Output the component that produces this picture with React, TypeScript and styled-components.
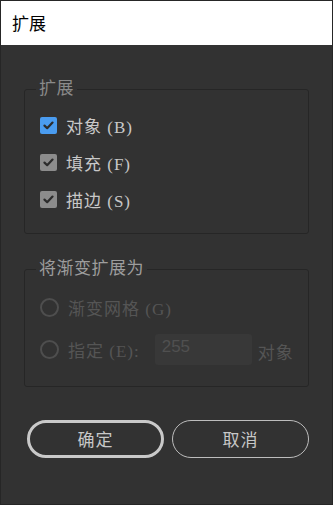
import styled, { createGlobalStyle } from 'styled-components';

const GlobalStyle = createGlobalStyle`
  html, body {
    margin: 0;
    padding: 0;
    background: #323232;
  }
  * {
    box-sizing: border-box;
  }
`;

const FONT = `"Liberation Serif", "Noto Sans CJK SC", serif`;

const Window = styled.div`
  width: 333px;
  height: 505px;
  background: #323232;
  border: 1px solid #262626;
  display: flex;
  flex-direction: column;
  font-family: ${FONT};
`;

const TitleBar = styled.div`
  height: 44px;
  background: #ffffff;
  display: flex;
  align-items: center;
  padding: 0 0 2px 11px;
  font-family: 'Noto Sans CJK SC', sans-serif;
  font-size: 17px;
  color: #000;
`;

const Body = styled.div`
  display: flex;
  flex-direction: column;
  padding: 35px 23px 0 23px;
`;

const Group = styled.fieldset<{ $bottom: number }>`
  margin: 0;
  border: 1px solid #262626;
  border-radius: 3px;
  padding: 17px 0 ${(p) => p.$bottom}px 15px;
  display: flex;
  flex-direction: column;
  gap: 17px;
  & + & {
    margin-top: 26px;
  }
`;

const Legend = styled.legend<{ $bright?: boolean }>`
  margin-left: -4px;
  padding: 0 3px 0 3px;
  font-size: 17px;
  line-height: 18px;
  letter-spacing: 0.5px;
  color: ${(p) => (p.$bright ? '#9d9d9d' : '#8a8a8a')};
`;

const Row = styled.label<{ $disabled?: boolean }>`
  display: flex;
  align-items: center;
  height: 20px;
  gap: 9px;
  font-size: 17px;
  letter-spacing: 1px;
  color: ${(p) => (p.$disabled ? '#555555' : '#c8c8c8')};
`;

const Box = styled.span<{ $active?: boolean }>`
  width: 17px;
  height: 17px;
  border-radius: 2px;
  background: ${(p) => (p.$active ? '#4a9cf0' : '#8c8c8c')};
  display: flex;
  align-items: center;
  justify-content: center;
  flex-shrink: 0;
`;

const Radio = styled.span`
  width: 19px;
  height: 19px;
  border-radius: 50%;
  border: 2px solid #4e4e4e;
  flex-shrink: 0;
`;

const RadioRow = styled(Row)`
  height: 31px;
`;

const RadioGap = styled.div`
  display: flex;
  flex-direction: column;
  gap: 11px;
  margin-top: -3px;
`;

const NumberBox = styled.div`
  width: 97px;
  height: 31px;
  background: #383838;
  border-radius: 3px;
  margin-left: 6px;
  padding: 3px 0 0 7px;
  font-family: 'Liberation Sans', sans-serif;
  font-size: 17px;
  letter-spacing: 0;
  color: #505050;
`;

const Unit = styled.span`
  margin-left: -3px;
  padding-top: 4px;
`;

const Buttons = styled.div`
  display: flex;
  gap: 8px;
  margin-top: 33px;
  padding-left: 3px;
`;

const Button = styled.button<{ $primary?: boolean }>`
  width: 137px;
  height: 38px;
  border-radius: 19px;
  background: transparent;
  border: ${(p) => (p.$primary ? '3px solid #c9c9c9' : '1.5px solid #bdbdbd')};
  color: #c8c8c8;
  font-family: ${FONT};
  font-size: 17px;
  letter-spacing: 1px;
  padding: 0 0 2px;
`;

const Check = ({ active }: { active?: boolean }) => (
  <Box $active={active}>
    <svg width="11" height="9" viewBox="0 0 11 9">
      <path d="M1.5 4.6 L4.2 7.2 L9.5 1.6" fill="none" stroke="#2c2c2c" strokeWidth="2.2" strokeLinecap="round" strokeLinejoin="round" />
    </svg>
  </Box>
);

const App = () => {
  return (
    <>
      <GlobalStyle />
      <Window>
        <TitleBar>扩展</TitleBar>
        <Body>
          <Group $bottom={24}>
            <Legend>扩展</Legend>
            <Row>
              <Check active />
              对象 (B)
            </Row>
            <Row>
              <Check />
              填充 (F)
            </Row>
            <Row>
              <Check />
              描边 (S)
            </Row>
          </Group>
          <Group $bottom={21}>
            <Legend $bright>将渐变扩展为</Legend>
            <RadioGap>
              <RadioRow $disabled>
                <Radio />
                渐变网格 (G)
              </RadioRow>
              <RadioRow $disabled>
                <Radio />
                指定 (E):
                <NumberBox>255</NumberBox>
                <Unit>对象</Unit>
              </RadioRow>
            </RadioGap>
          </Group>
          <Buttons>
            <Button $primary>确定</Button>
            <Button>取消</Button>
          </Buttons>
        </Body>
      </Window>
    </>
  );
};

export default App;
